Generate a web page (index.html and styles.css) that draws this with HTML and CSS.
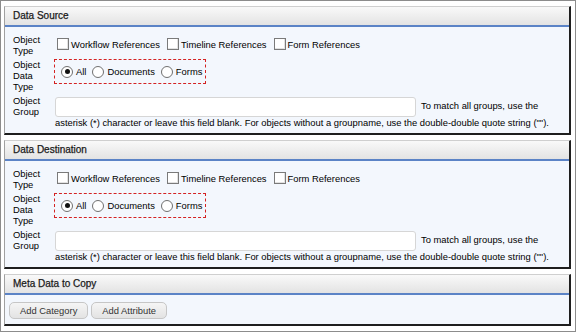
FILE: index.html
```html
<!DOCTYPE html>
<html>
<head>
<meta charset="utf-8">
<link rel="stylesheet" href="styles.css">
</head>
<body>
<div class="frame">
  <section class="panel">
    <div class="ph">Data Source</div>
    <div class="pb">
      <div class="lbl">Object<br>Type</div>
      <div class="ctl checks">
        <label class="opt"><span class="cb"></span>Workflow References</label>
        <label class="opt"><span class="cb"></span>Timeline References</label>
        <label class="opt"><span class="cb"></span>Form References</label>
      </div>
      <div class="lbl">Object<br>Data<br>Type</div>
      <div class="ctl">
        <div class="radios">
          <label class="opt"><span class="rb on"></span>All</label>
          <label class="opt"><span class="rb"></span>Documents</label>
          <label class="opt"><span class="rb"></span>Forms</label>
        </div>
      </div>
      <div class="lbl">Object<br>Group</div>
      <div class="ctl group"><span class="inp"></span>To match all groups, use the<br>asterisk (*) character or leave this field blank. For objects without a groupname, use the double-double quote string ("").</div>
    </div>
  </section>
  <section class="panel">
    <div class="ph">Data Destination</div>
    <div class="pb">
      <div class="lbl">Object<br>Type</div>
      <div class="ctl checks">
        <label class="opt"><span class="cb"></span>Workflow References</label>
        <label class="opt"><span class="cb"></span>Timeline References</label>
        <label class="opt"><span class="cb"></span>Form References</label>
      </div>
      <div class="lbl">Object<br>Data<br>Type</div>
      <div class="ctl">
        <div class="radios">
          <label class="opt"><span class="rb on"></span>All</label>
          <label class="opt"><span class="rb"></span>Documents</label>
          <label class="opt"><span class="rb"></span>Forms</label>
        </div>
      </div>
      <div class="lbl">Object<br>Group</div>
      <div class="ctl group"><span class="inp"></span>To match all groups, use the<br>asterisk (*) character or leave this field blank. For objects without a groupname, use the double-double quote string ("").</div>
    </div>
  </section>
  <section class="panel">
    <div class="ph">Meta Data to Copy</div>
    <div class="pb2">
      <span class="btn">Add Category</span><span class="btn">Add Attribute</span>
    </div>
  </section>
</div>
</body>
</html>
```
FILE: styles.css
```css
html, body {
  margin: 0;
  padding: 0;
  background: #fff;
}
body {
  font-family: "Liberation Sans", Arial, sans-serif;
  font-size: 9.4px;
  color: #000;
}
.frame {
  box-sizing: border-box;
  width: 576px;
  height: 332px;
  border: 1px solid #8c8c8c;
  padding: 5px 4px 0 3px;
}
.panel {
  border-top: 1px solid #cfcfcf;
  border-left: 1px solid #a0a0a0;
  border-right: 2px solid #1e1e1e;
  border-bottom: 2px solid #1e1e1e;
  margin-bottom: 5px;
  background: #f3f7fd;
}
.ph {
  height: 18px;
  line-height: 18px;
  padding-left: 8px;
  font-size: 10px;
  color: #1a1a1a;
  -webkit-text-stroke: 0.25px #1a1a1a;
  background: linear-gradient(#f9f9f9, #e3e3e3);
  border-bottom: 2px solid #5b83c6;
}
.pb {
  display: grid;
  grid-template-columns: 41px 1fr;
  grid-template-rows: 22px 33px auto;
  row-gap: 3px;
  padding: 7px 8px 5px 8px;
}
.lbl {
  line-height: 11px;
}
.ctl {
  line-height: 11px;
}
.checks {
  display: flex;
  align-items: center;
  height: 14px;
  margin-top: 3px;
}
.opt {
  display: inline-flex;
  align-items: center;
  white-space: nowrap;
}
.checks .opt { margin-right: 4px; }
.cb {
  box-sizing: border-box;
  width: 12px;
  height: 12px;
  margin: 0 2px 0 3px;
  background: #fff;
  border: 1px solid #7a7a7a;
  box-shadow: inset -1px -1px 0 #e2e2e2;
}
.radios {
  display: inline-flex;
  align-items: center;
  box-sizing: border-box;
  height: 25px;
  padding: 0 3px 0 6px;
  border: 1px dashed #d42222;
}
.radios .opt { margin-right: 6px; }
.radios .opt:last-child { margin-right: 0; }
.rb {
  box-sizing: border-box;
  width: 12px;
  height: 12px;
  margin-right: 3px;
  border: 1px solid #707070;
  border-radius: 50%;
  background: #fff;
  position: relative;
}
.rb.on::after {
  content: "";
  position: absolute;
  left: 2.5px;
  top: 2.5px;
  width: 5px;
  height: 5px;
  border-radius: 50%;
  background: #111;
}
.group {
  padding: 3px 0 0 1px;
  margin-top: -1px;
}
.inp {
  display: inline-block;
  box-sizing: border-box;
  width: 361px;
  height: 20px;
  vertical-align: middle;
  margin-right: 5px;
  background: #fff;
  border: 1px solid #d6d6d6;
  border-radius: 3px;
}
.pb2 {
  display: flex;
  gap: 3px;
  padding: 7px 4px 5px 4px;
}
.btn {
  box-sizing: border-box;
  height: 17px;
  line-height: 15px;
  padding: 0 10px;
  font-size: 9.4px;
  color: #333;
  background: linear-gradient(#f5f5f5, #e3e3e3);
  border: 1px solid #c6c6c6;
  border-radius: 5px;
}
```
